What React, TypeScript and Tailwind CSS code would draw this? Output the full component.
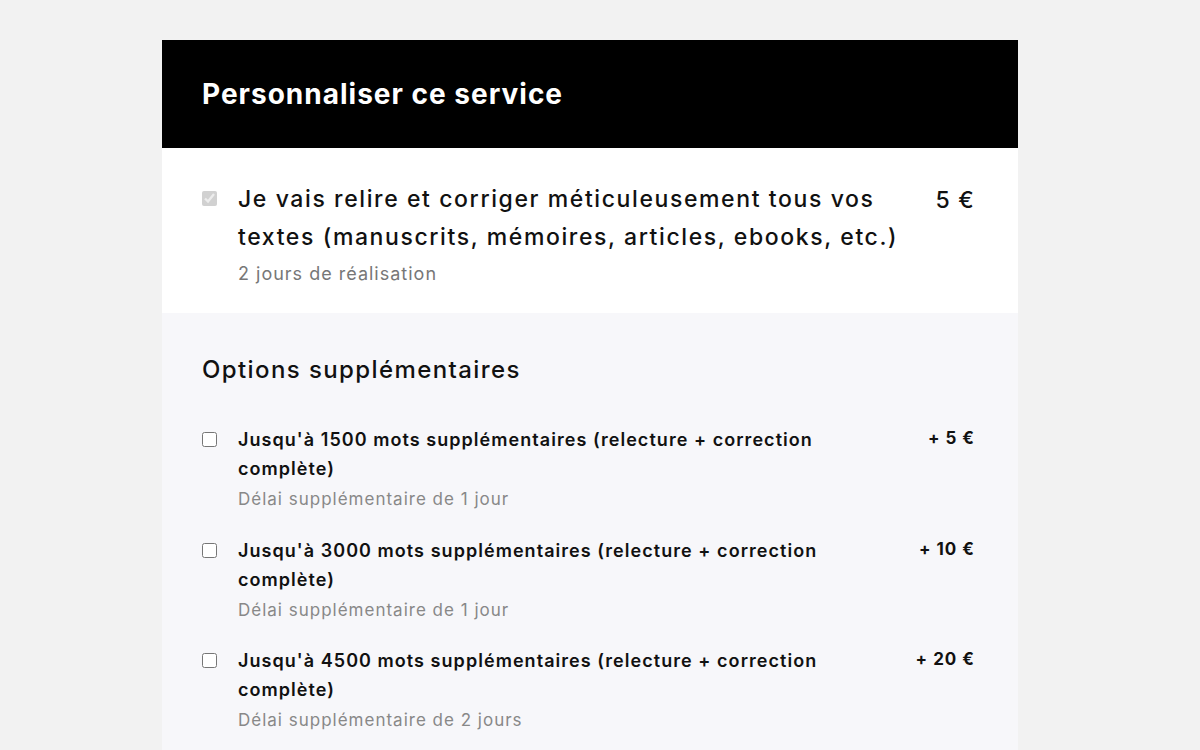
const options = [
  { label: "Jusqu'à 1500 mots supplémentaires (relecture + correction complète)", delay: "Délai supplémentaire de 1 jour", price: "+ 5 €" },
  { label: "Jusqu'à 3000 mots supplémentaires (relecture + correction complète)", delay: "Délai supplémentaire de 1 jour", price: "+ 10 €" },
  { label: "Jusqu'à 4500 mots supplémentaires (relecture + correction complète)", delay: "Délai supplémentaire de 2 jours", price: "+ 20 €" },
];

export default function App() {
  return (
    <div className="min-h-[750px] bg-[#f2f2f2] pt-10 font-['Inter',sans-serif] text-[#111]">
      <div className="ml-[162px] w-[856px]">
        <div className="flex h-[108px] items-center bg-black px-10">
          <h2 className="text-[28px] font-bold tracking-[1px] text-white">Personnaliser ce service</h2>
        </div>

        <div className="flex bg-white pl-10 pr-[43px] pt-[32px] pb-[27px]">
          <input type="checkbox" checked disabled readOnly className="mt-[11px] h-[15px] w-[15px] shrink-0" />
          <div className="ml-[21px] w-[670px]">
            <p className="text-[23px] leading-[38px] font-medium tracking-[1.6px]">
              Je vais relire et corriger méticuleusement tous vos textes (manuscrits, mémoires, articles, ebooks, etc.)
            </p>
            <p className="mt-[6px] text-[18px] leading-6 tracking-[1px] text-[#777]">2 jours de réalisation</p>
          </div>
          <div className="ml-auto pt-[3px] text-[23px] font-medium tracking-[1.2px]">5 €</div>
        </div>

        <div className="bg-[#f7f7fa] pl-10 pr-[43px] pt-[39px] pb-6">
          <h3 className="text-[24px] font-medium tracking-[1.4px]">Options supplémentaires</h3>
          <div className="mt-[37px] flex flex-col gap-[21.5px]">
            {options.map((o) => (
              <div key={o.price} className="flex">
                <input type="checkbox" className="mt-[7px] h-[15px] w-[15px] shrink-0" />
                <div className="ml-[21px] w-[610px]">
                  <p className="text-[18px] leading-[29px] font-semibold tracking-[1.05px]">{o.label}</p>
                  <p className="mt-[2px] text-[17px] leading-[29px] tracking-[1px] text-[#888]">{o.delay}</p>
                </div>
                <div className="ml-auto pt-[1px] text-[17px] font-bold tracking-[1px]">{o.price}</div>
              </div>
            ))}
          </div>
        </div>
      </div>
    </div>
  );
}
